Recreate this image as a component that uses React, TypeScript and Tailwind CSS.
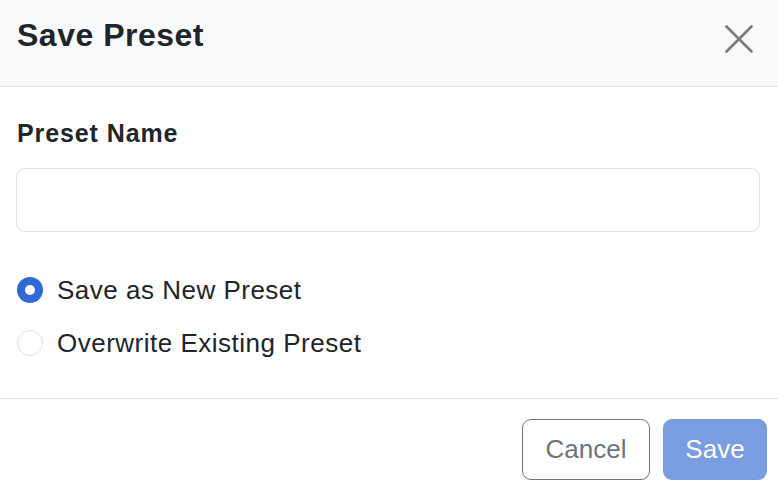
import React from "react";

export default function App() {
  return (
    <div className="w-[778px] h-[492px] bg-white overflow-hidden text-[#212529]" style={{ fontFamily: '"Liberation Sans", Arial, sans-serif' }}>
      <div className="h-[87px] bg-[#f8f9fa] border-b border-[#dee2e6] flex items-start justify-between pl-[17px] pr-[25px]">
        <h1 className="mt-[16px] text-[32px] leading-[38px] font-bold tracking-[0.5px] text-[#212529]">Save Preset</h1>
        <button className="mt-[25px] w-[28px] h-[28px] flex items-center justify-center">
          <svg width="28" height="28" viewBox="0 0 28 28" fill="none" stroke="#7b7b7b" strokeWidth="2.6" strokeLinecap="round">
            <path d="M1.5 1.5 L26.5 26.5 M26.5 1.5 L1.5 26.5" />
          </svg>
        </button>
      </div>
      <div className="h-[311px] px-[16px] pt-[31px]">
        <label className="block pl-[1px] text-[25px] leading-[30px] font-bold tracking-[0.9px]">Preset Name</label>
        <input className="mt-[20px] block w-[744px] h-[64px] rounded-[9px] border border-[#dee2e6] outline-none px-3 text-[26px]" />
        <div className="mt-[42px] flex flex-col gap-[21px]">
          <label className="flex items-center h-[32px] text-[26px] leading-[32px] tracking-[0.5px]">
            <span className="ml-[1px] w-[26px] h-[26px] rounded-full bg-[#3069d6] flex items-center justify-center">
              <span className="w-[10px] h-[10px] rounded-full bg-white" />
            </span>
            <span className="ml-[14px]">Save as New Preset</span>
          </label>
          <label className="flex items-center h-[32px] text-[26px] leading-[32px] tracking-[0.5px]">
            <span className="ml-[1px] w-[26px] h-[26px] rounded-full border border-[#dee2e6] bg-white" />
            <span className="ml-[14px]">Overwrite Existing Preset</span>
          </label>
        </div>
      </div>
      <div className="border-t border-[#dee2e6] flex justify-end gap-[13px] pt-[20px] pr-[11px]">
        <button className="w-[128px] h-[61px] rounded-[9px] border border-[#6c757d] text-[#6c757d] text-[26px] bg-white">Cancel</button>
        <button className="w-[104px] h-[61px] rounded-[9px] bg-[#799de0] text-white text-[26px]">Save</button>
      </div>
    </div>
  );
}
